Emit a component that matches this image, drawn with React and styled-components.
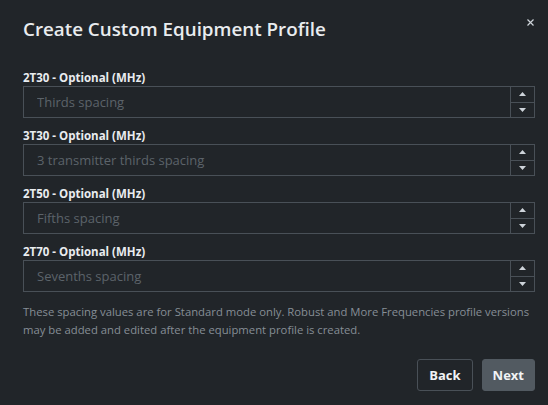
import React from 'react'
import styled, { createGlobalStyle } from 'styled-components'

const GlobalStyle = createGlobalStyle`
  html, body {
    margin: 0;
    padding: 0;
    background: #212529;
  }
  body {
    font-family: "Open Sans", "Noto Sans", sans-serif;
  }
`

// Data
const fields = [
  { label: '2T30 - Optional (MHz)', placeholder: 'Thirds spacing' },
  { label: '3T30 - Optional (MHz)', placeholder: '3 transmitter thirds spacing' },
  { label: '2T50 - Optional (MHz)', placeholder: 'Fifths spacing' },
  { label: '2T70 - Optional (MHz)', placeholder: 'Sevenths spacing' },
]

// Style Components
const Modal = styled.div`
  width: 548px;
  height: 405px;
  box-sizing: border-box;
  padding: 16px 13px 0 23px;
  background: #212529;
  color: #dee2e6;
`

const Header = styled.header`
  display: flex;
  justify-content: space-between;
  align-items: flex-start;
  height: 53px;
`

const Title = styled.h2`
  margin: 0;
  font-size: 18.8px;
  line-height: 26px;
  font-weight: 600;
  color: #e9ecef;
`

const Close = styled.button`
  display: flex;
  align-items: center;
  justify-content: center;
  width: 16px;
  height: 16px;
  margin-top: -2px;
  margin-right: -3px;
  padding: 0;
  border: 0;
  background: none;
  color: #ced4da;
  cursor: pointer;
`

const Field = styled.div`
  display: flex;
  flex-direction: column;
  margin-bottom: 9px;
`

const Label = styled.label`
  font-size: 11.5px;
  font-weight: 700;
  line-height: 17px;
  color: #e9ecef;
`

const InputBox = styled.div`
  display: flex;
  height: 32px;
  box-sizing: border-box;
  border: 1px solid #495057;
`

const Input = styled.input`
  flex: 1;
  min-width: 0;
  padding: 0 13px;
  border: 0;
  background: transparent;
  font-family: inherit;
  font-size: 13px;
  color: #dee2e6;
  outline: none;

  &::placeholder {
    color: #5c636a;
  }
`

const Spinner = styled.div`
  display: flex;
  flex-direction: column;
  width: 23px;
  border-left: 1px solid #495057;
`

const Step = styled.button`
  flex: 1;
  display: flex;
  align-items: center;
  justify-content: center;
  padding: 0;
  border: 0;
  background: none;
  color: #ced4da;
  border-top: ${({ $down }) => ($down ? '1px solid #495057' : '0')};
`

const Help = styled.p`
  margin: 11px 0 0;
  font-size: 11.3px;
  line-height: 17.5px;
  color: #868e96;
`

const Footer = styled.footer`
  display: flex;
  justify-content: flex-end;
  gap: 9px;
  margin-top: 21px;
`

const Button = styled.button`
  height: 32px;
  padding: 0 ${({ $primary }) => ($primary ? '10px' : '11px')};
  border-radius: 3px;
  border: 1px solid ${({ $primary }) => ($primary ? '#525a61' : '#495057')};
  background: ${({ $primary }) => ($primary ? '#525a61' : 'transparent')};
  font-family: inherit;
  font-size: 13px;
  font-weight: 700;
  color: #f1f3f5;
  cursor: pointer;
`

// Rendering Components
const Arrow = ({ down }) => (
  <svg width="7" height="4" viewBox="0 0 7 4">
    <path d={down ? 'M0 0H7L3.5 4Z' : 'M3.5 0L7 4H0Z'} fill="currentColor" />
  </svg>
)

const NumberField = ({ label, placeholder }) => (
  <Field>
    <Label>{label}</Label>
    <InputBox>
      <Input type="text" placeholder={placeholder} />
      <Spinner>
        <Step><Arrow /></Step>
        <Step $down><Arrow down /></Step>
      </Spinner>
    </InputBox>
  </Field>
)

const App = () => (
  <Modal>
    <GlobalStyle />
    <Header>
      <Title>Create Custom Equipment Profile</Title>
      <Close aria-label="Close">
        <svg width="7" height="7" viewBox="0 0 7 7">
          <path d="M0.5 0.5L6.5 6.5M6.5 0.5L0.5 6.5" stroke="currentColor" strokeWidth="1.2" />
        </svg>
      </Close>
    </Header>
    {fields.map((f) => (
      <NumberField key={f.label} {...f} />
    ))}
    <Help>
      These spacing values are for Standard mode only. Robust and More Frequencies profile versions
      may be added and edited after the equipment profile is created.
    </Help>
    <Footer>
      <Button>Back</Button>
      <Button $primary>Next</Button>
    </Footer>
  </Modal>
)

export default App
